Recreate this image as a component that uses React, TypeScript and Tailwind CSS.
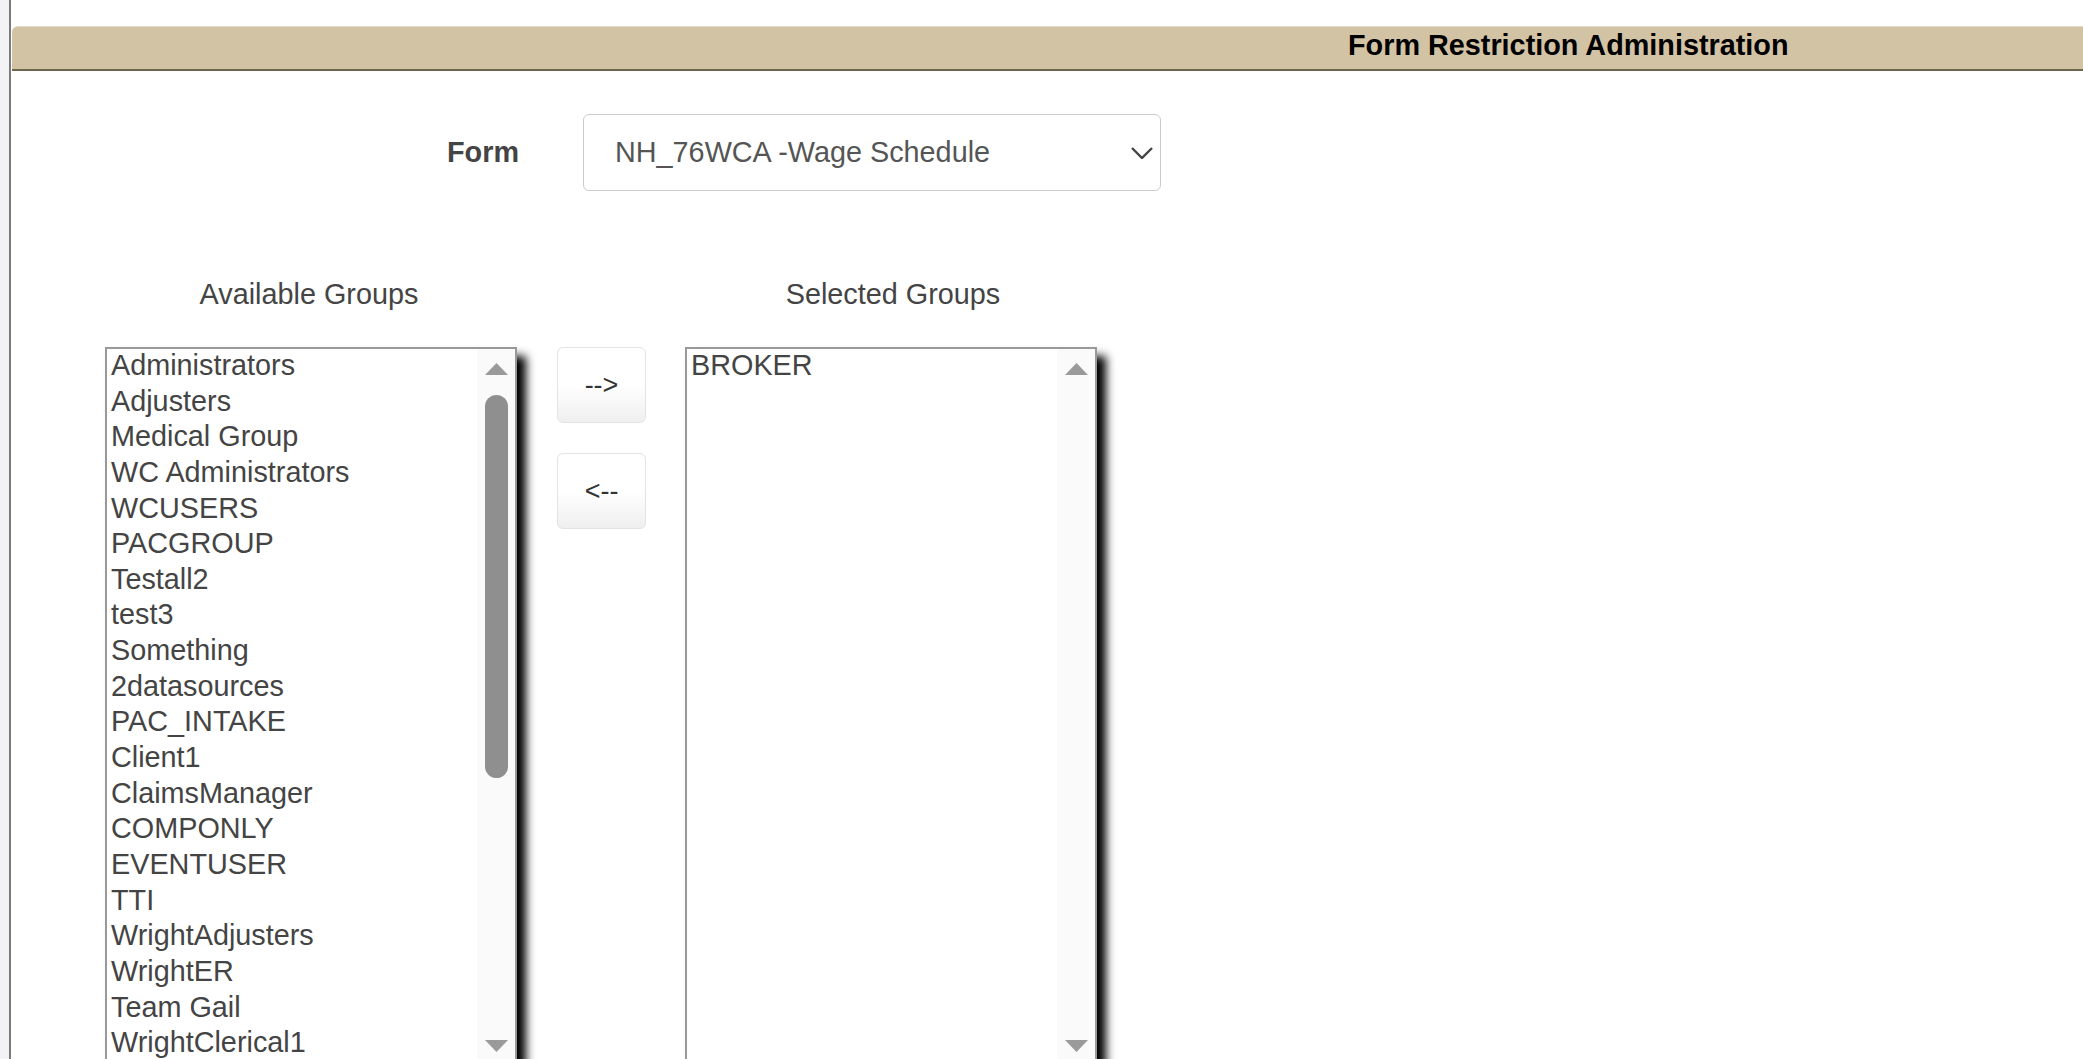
import React from 'react';

const available = [
  'Administrators',
  'Adjusters',
  'Medical Group',
  'WC Administrators',
  'WCUSERS',
  'PACGROUP',
  'Testall2',
  'test3',
  'Something',
  '2datasources',
  'PAC_INTAKE',
  'Client1',
  'ClaimsManager',
  'COMPONLY',
  'EVENTUSER',
  'TTI',
  'WrightAdjusters',
  'WrightER',
  'Team Gail',
  'WrightClerical1',
];

const selected = ['BROKER'];

function ScrollArrow({ down }: { down?: boolean }) {
  return (
    <div className="flex h-[40px] items-center justify-center">
      <svg width="23" height="12" viewBox="0 0 23 12">
        <polygon points={down ? '0,0 23,0 11.5,12' : '11.5,0 23,12 0,12'} fill="#9a9a9a" />
      </svg>
    </div>
  );
}

function ListBox({ items, thumb }: { items: string[]; thumb?: boolean }) {
  return (
    <div className="flex h-[721px] w-[412px] overflow-hidden border-2 border-[#999] bg-white shadow-[9px_9px_9px_#000]">
      <div className="-mt-[1px] min-w-0 flex-1 pl-[4px] text-[#444]">
        {items.map((item) => (
          <div key={item} className="h-[35.65px] whitespace-nowrap leading-[35.65px]">
            {item}
          </div>
        ))}
      </div>
      <div className="flex w-[38px] flex-col items-center bg-[#fafafa]">
        <ScrollArrow />
        {thumb && <div className="mt-[6px] h-[383px] w-[23px] rounded-full bg-[#8f8f8f]" />}
        <div className="flex-1" />
        <ScrollArrow down />
      </div>
    </div>
  );
}

function MoveButton({ label }: { label: string }) {
  return (
    <button className="h-[76px] w-[89px] rounded-[6px] border border-[#e3e3e3] bg-linear-to-b from-white from-50% to-[#efefef] text-[27px] text-[#333]">
      {label}
    </button>
  );
}

export default function App() {
  return (
    <div className="flex h-[1059px] w-full overflow-hidden bg-white font-['Liberation_Sans',Arial,sans-serif] text-[28.8px]">
      <div className="w-[9px] bg-[#f3f3f5]" />
      <div className="w-[2px] bg-[#7b7b7b]" />

      <div className="min-w-0 flex-1 pt-[26px]">
        <div className="ml-[1px] h-[45px] whitespace-nowrap rounded-tl-[6px] border-t border-b-2 border-t-[#e2d9c7] border-b-[#6d6650] bg-[#d3c3a5] pl-[1336px] pt-[2px] font-bold leading-[33px] text-black">
          Form Restriction Administration
        </div>

        <div className="mt-[43px] flex items-center">
          <div className="w-[508px] text-right font-bold leading-[33px] text-[#444]">Form</div>
          <div className="ml-[64px] flex h-[77px] w-[578px] items-center rounded-[6px] border-[1.5px] border-[#ccc] bg-white pl-[31px] pr-[7px]">
            <span className="flex-1 whitespace-nowrap leading-[33px] text-[#555]">NH_76WCA -Wage Schedule</span>
            <svg width="22" height="12" viewBox="0 0 22 12">
              <polyline points="1,1 11,11 21,1" fill="none" stroke="#444" strokeWidth="2.4" />
            </svg>
          </div>
        </div>

        <div className="mt-[87px] flex pl-[92px] leading-[33px] text-[#444]">
          <div className="w-[412px] text-center">Available Groups</div>
          <div className="w-[172px]" />
          <div className="w-[412px] text-center">Selected Groups</div>
        </div>

        <div className="mt-[36px] flex items-start pl-[94px]">
          <ListBox items={available} thumb />
          <div className="ml-[40px] flex w-[89px] flex-col gap-[30px]">
            <MoveButton label="-->" />
            <MoveButton label="<--" />
          </div>
          <div className="ml-[39px]">
            <ListBox items={selected} />
          </div>
        </div>
      </div>
    </div>
  );
}
